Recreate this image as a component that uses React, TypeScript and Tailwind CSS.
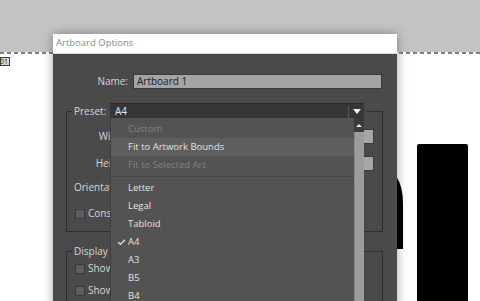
import { Check } from 'lucide-react'

const ITEMS: { label: string; disabled?: boolean; active?: boolean; checked?: boolean; sep?: boolean }[] = [
  { label: 'Custom', disabled: true },
  { label: 'Fit to Artwork Bounds', active: true },
  { label: 'Fit to Selected Art', disabled: true },
  { label: '', sep: true },
  { label: 'Letter' },
  { label: 'Legal' },
  { label: 'Tabloid' },
  { label: 'A4', checked: true },
  { label: 'A3' },
  { label: 'B5' },
  { label: 'B4' },
]

function CheckRow({ label, className = '' }: { label: string; className?: string }) {
  return (
    <div className={`flex items-center gap-[3px] ${className}`}>
      <div className="w-[10px] h-[10px] bg-[#5c5c5c] border border-[#383838]" />
      <span>{label}</span>
    </div>
  )
}

function FieldRow({ label, className = '' }: { label: string; className?: string }) {
  return (
    <div className={`flex items-center gap-[4px] ${className}`}>
      <span className="w-[57px] text-right">{label}</span>
      <div className="w-[241px] h-[15px] bg-[#a6a6a6] border border-[#3a3a3a]" />
    </div>
  )
}

export default function App() {
  return (
    <div className="relative w-[480px] h-[301px] overflow-hidden bg-white font-['Open_Sans',sans-serif]">
      {/* canvas */}
      <div className="h-[52px] bg-[#c3c3c3]" />
      <div className="h-[2px] bg-[repeating-linear-gradient(90deg,#7e7e7e_0_4px,transparent_4px_7px)]" />
      <div className="mt-[3px] w-[10px] h-[9px] bg-[#d9d9d9] border border-[#3c3c3c] flex items-center justify-end overflow-hidden text-[7px] leading-none text-[#222] pr-[1px]">
        01
      </div>

      {/* artwork behind dialog */}
      <svg className="absolute left-[390px] top-[170px]" width="20" height="85" viewBox="0 0 20 85">
        <path d="M6 6 Q13 16 13 34 L13 79 L0 79 L0 6 Z" fill="#000" />
      </svg>
      <div className="absolute left-[417px] top-[144px] w-[51px] h-[170px] bg-black rounded-[2px]" />

      {/* dialog */}
      <div className="absolute left-[53px] top-[34px] w-[344px] h-[280px] flex flex-col shadow-[0_0_10px_rgba(0,0,0,0.35)] text-[10px] text-[#d6d6d6]">
        <div className="h-[20px] shrink-0 bg-white flex items-center pl-[3px] text-[9.5px] text-[#8a8a8a] border-b border-[#d8d8d8]">
          Artboard Options
        </div>
        <div className="relative flex-1 bg-[#4a4a4a]">
          <div className="mt-[20px] flex items-center gap-[5px]">
            <span className="w-[75px] text-right">Name:</span>
            <div className="w-[249px] h-[15px] bg-[#a4a4a4] border border-[#3a3a3a] flex items-center pl-[3px] text-[#1d1d1d]">
              Artboard 1
            </div>
          </div>

          <fieldset className="mt-[14px] ml-[13px] w-[317px] h-[129px] border border-[#2e2e2e] pl-[5px]">
            <legend className="flex items-center gap-[4px] pl-[2px] pr-[3px]">
              <span className="w-[32px]">Preset:</span>
              <div className="w-[254px] h-[16px] bg-[#363636] border-t border-[#2a2a2a] flex items-center">
                <span className="flex-1 pl-[5px] text-[#e6e6e6]">A4</span>
                <div className="w-px h-[12px] bg-[#555]" />
                <div className="w-[15px] flex justify-center">
                  <div className="w-0 h-0 border-l-[4px] border-r-[4px] border-t-[5px] border-l-transparent border-r-transparent border-t-[#eee]" />
                </div>
              </div>
            </legend>
            <FieldRow label="Width:" className="mt-[10px]" />
            <FieldRow label="Height:" className="mt-[12px]" />
            <div className="mt-[9px] pl-[2px]">Orientation:</div>
            <CheckRow label="Constrain proportions" className="mt-[11px] pl-[3px]" />
          </fieldset>

          <fieldset className="mt-[11px] ml-[13px] w-[317px] h-[80px] border border-[#2e2e2e] pl-[5px]">
            <legend className="pl-[2px] pr-[3px] h-[16px] flex items-center">Display</legend>
            <CheckRow label="Show Center Mark" className="mt-[2px] pl-[3px]" />
            <CheckRow label="Show Cross Hairs" className="mt-[7px] pl-[3px]" />
          </fieldset>

          {/* preset dropdown list */}
          <div className="absolute left-[57px] top-[64px] w-[254px] h-[200px] bg-[#535353] border-l border-[#3f3f3f] flex">
            <div className="flex-1 pt-[2px] text-[9.5px]">
              {ITEMS.map((it, i) =>
                it.sep ? (
                  <div key={i} className="h-[5px] pt-[2px]">
                    <div className="h-px bg-[#474747]" />
                  </div>
                ) : (
                  <div
                    key={i}
                    className={`h-[18px] flex items-center ${it.active ? 'bg-[#5e5e5e]' : ''} ${
                      it.disabled ? 'text-[#828282]' : 'text-[#e2e2e2]'
                    }`}
                  >
                    <span className="w-[17px] flex justify-end pr-[2px]">
                      {it.checked && <Check className="w-[9px] h-[9px] text-[#e8e8d8]" strokeWidth={3.5} />}
                    </span>
                    <span>{it.label}</span>
                  </div>
                ),
              )}
            </div>
            <div className="w-[10px] flex flex-col">
              <div className="h-[14px] bg-[#3b3b3b] flex items-center justify-center">
                <div className="w-0 h-0 border-l-[3px] border-r-[3px] border-b-[3px] border-l-transparent border-r-transparent border-b-[#e8e8e8]" />
              </div>
              <div className="flex-1 bg-[#9c9c9c] border-l border-[#8a8a8a]" />
            </div>
          </div>
        </div>
      </div>
    </div>
  )
}
